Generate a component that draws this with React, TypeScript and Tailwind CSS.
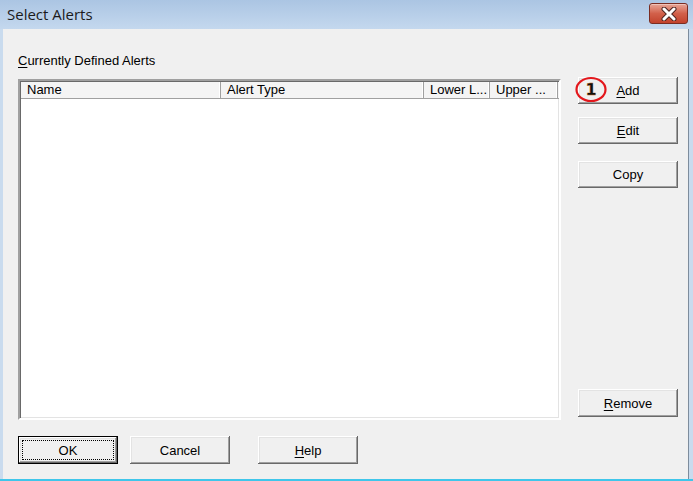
import React from 'react';

const raised =
  'shadow-[inset_-1px_-1px_#696969,inset_1px_1px_#ffffff,inset_-2px_-2px_#a0a0a0,inset_2px_2px_#e3e3e3]';

function Btn({ label, mn, className = '' }: { label: string; mn?: number; className?: string }) {
  const text =
    mn === undefined ? (
      label
    ) : (
      <>
        {label.slice(0, mn)}
        <span className="underline underline-offset-2">{label[mn]}</span>
        {label.slice(mn + 1)}
      </>
    );
  return (
    <div
      className={`flex h-[27px] w-[100px] items-center justify-center bg-[#f0f0f0] text-[13px] leading-[15px] text-black ${raised} ${className}`}
    >
      {text}
    </div>
  );
}

function HeaderCell({ label, w }: { label: string; w: number }) {
  return (
    <div
      className="flex h-full shrink-0 items-center overflow-hidden whitespace-nowrap border-r border-[#a0a0a0] pl-[6px] shadow-[inset_-1px_0_#ffffff]"
      style={{ width: w }}
    >
      {label}
    </div>
  );
}

export default function App() {
  return (
    <div className="flex h-[481px] w-[693px] flex-col overflow-hidden border-b-2 border-[#3fc6ea] bg-[#c9dbee] font-['Liberation_Sans',Arial,sans-serif] text-black">
      {/* Title bar */}
      <div className="flex h-[29px] shrink-0 items-start justify-between bg-gradient-to-b from-[#abc5e3] to-[#c4d8ee]">
        <span className="mt-[4px] pl-[7px] font-['Open_Sans',sans-serif] text-[15px] leading-[20px] text-[#1b1b1b]">
          Select Alerts
        </span>
        <div className="mr-[5px] mt-[3px] flex h-[21px] w-[39px] items-center justify-center rounded-[3px] border border-[#7a2d22] bg-gradient-to-b from-[#e6a597] via-[#d2604a] to-[#c2422c] shadow-[inset_0_1px_#f0c2b8]">
          <svg width="16" height="14" viewBox="0 0 16 14">
            <path d="M3 2 L13 12 M13 2 L3 12" stroke="#4d2420" strokeWidth="5" strokeLinecap="round" />
            <path d="M3 2 L13 12 M13 2 L3 12" stroke="#ffffff" strokeWidth="3" strokeLinecap="round" />
          </svg>
        </div>
      </div>

      {/* Dialog body */}
      <div className="ml-[3px] flex w-[686px] flex-1 flex-col border-r border-[#7d8c9c] bg-[#f0f0f0] pl-[15px] pt-[24px] text-[13px] leading-[15px]">
        <div className="flex">
          {/* Left column */}
          <div className="flex w-[543px] flex-col">
            <div className="h-[15px]">
              <span className="underline underline-offset-2">C</span>urrently Defined Alerts
            </div>
            <div className="mt-[11px] flex h-[341px] flex-col border-2 border-[#a0a0a0] border-b-white border-r-white bg-white shadow-[inset_1px_1px_#696969,inset_-1px_-1px_#e3e3e3]">
              <div className="ml-[1px] mt-[1px] flex h-[17px] border-b border-[#a0a0a0] bg-[#f4f4f4] leading-[16px]">
                <HeaderCell label="Name" w={200} />
                <HeaderCell label="Alert Type" w={203} />
                <HeaderCell label="Lower L..." w={66} />
                <HeaderCell label="Upper ..." w={68} />
              </div>
            </div>
          </div>

          {/* Right column */}
          <div className="ml-[17px] flex flex-col pb-[3px] pt-[24px]">
            <div className="relative">
              <Btn label="Add" mn={0} />
              <svg className="absolute left-[-3px] top-[-1px]" width="34" height="28" viewBox="0 0 34 28">
                <ellipse cx="16" cy="13.5" rx="14.5" ry="11.5" fill="none" stroke="#e3171c" strokeWidth="2.2" />
                <text
                  x="16"
                  y="19"
                  textAnchor="middle"
                  fontFamily="DejaVu Sans, sans-serif"
                  fontWeight="bold"
                  fontSize="16"
                  fill="#111"
                  stroke="#c8681a"
                  strokeWidth="0.3"
                >
                  1
                </text>
              </svg>
            </div>
            <Btn label="Edit" mn={0} className="mt-[13px]" />
            <Btn label="Copy" className="mt-[17px]" />
            <Btn label="Remove" mn={0} className="mt-auto h-[28px]" />
          </div>
        </div>

        {/* Bottom buttons */}
        <div className="mt-[16px] flex">
          <div className="relative flex h-[28px] w-[100px] items-center justify-center border border-black bg-[#f0f0f0] shadow-[inset_-1px_-1px_#696969,inset_1px_1px_#ffffff,inset_-2px_-2px_#a0a0a0,inset_2px_2px_#e3e3e3]">
            <div className="absolute inset-[3px] border border-dotted border-black" />
            OK
          </div>
          <Btn label="Cancel" className="ml-[12px] h-[28px]" />
          <Btn label="Help" mn={0} className="ml-[28px] h-[28px]" />
        </div>
      </div>
    </div>
  );
}
